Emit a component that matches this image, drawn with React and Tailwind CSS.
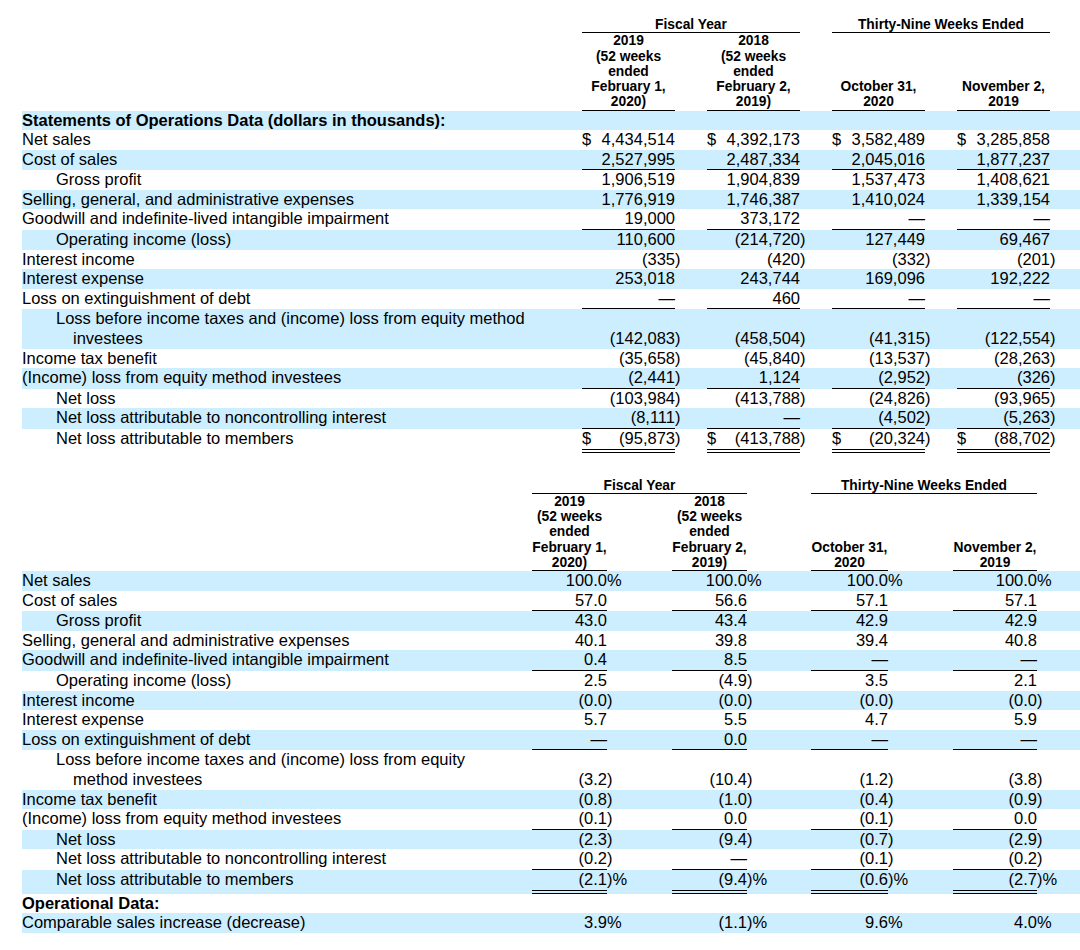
import React from "react";

const STRIPE = "bg-[#cceeff]";

const T1 = {
  label: "w-[560px]",
  cols: ["w-[93px]", "w-[93px]", "w-[93px]", "w-[93px]"],
  gaps: ["w-[32px]", "w-[32px]", "w-[32px]", "w-[12px]"],
  groupA: "w-[218px]",
  groupGap: "w-[32px]",
  groupB: "w-[218px]",
};

const T2 = {
  label: "w-[510px]",
  cols: ["w-[75px]", "w-[75px]", "w-[77px]", "w-[84px]"],
  gaps: ["w-[65px]", "w-[64px]", "w-[65px]", "w-[24px]"],
  groupA: "w-[215px]",
  groupGap: "w-[64px]",
  groupB: "w-[226px]",
};

const HEADS = [
  ["2019", "(52 weeks", "ended", "February 1,", "2020)"],
  ["2018", "(52 weeks", "ended", "February 2,", "2019)"],
  ["October 31,", "2020"],
  ["November 2,", "2019"],
];

const dollars = [
  { label: "Statements of Operations Data (dollars in thousands):", bold: true, s: true },
  { label: "Net sales", values: ["$4,434,514", "$4,392,173", "$3,582,489", "$3,285,858"] },
  { label: "Cost of sales", s: true, line: "single", values: ["2,527,995", "2,487,334", "2,045,016", "1,877,237"] },
  { label: "Gross profit", indent: 1, values: ["1,906,519", "1,904,839", "1,537,473", "1,408,621"] },
  { label: "Selling, general, and administrative expenses", s: true, values: ["1,776,919", "1,746,387", "1,410,024", "1,339,154"] },
  { label: "Goodwill and indefinite-lived intangible impairment", line: "single", values: ["19,000", "373,172", "—", "—"] },
  { label: "Operating income (loss)", indent: 1, s: true, values: ["110,600", "(214,720)", "127,449", "69,467"] },
  { label: "Interest income", values: ["(335)", "(420)", "(332)", "(201)"] },
  { label: "Interest expense", s: true, values: ["253,018", "243,744", "169,096", "192,222"] },
  { label: "Loss on extinguishment of debt", line: "single", values: ["—", "460", "—", "—"] },
  { label: "Loss before income taxes and (income) loss from equity method investees", indent: 2, s: true, values: ["(142,083)", "(458,504)", "(41,315)", "(122,554)"] },
  { label: "Income tax benefit", values: ["(35,658)", "(45,840)", "(13,537)", "(28,263)"] },
  { label: "(Income) loss from equity method investees", s: true, line: "single", values: ["(2,441)", "1,124", "(2,952)", "(326)"] },
  { label: "Net loss", indent: 1, values: ["(103,984)", "(413,788)", "(24,826)", "(93,965)"] },
  { label: "Net loss attributable to noncontrolling interest", indent: 1, s: true, line: "single", values: ["(8,111)", "—", "(4,502)", "(5,263)"] },
  { label: "Net loss attributable to members", indent: 1, line: "double", values: ["$(95,873)", "$(413,788)", "$(20,324)", "$(88,702)"] },
];

const percents = [
  { label: "Net sales", s: true, values: ["100.0%", "100.0%", "100.0%", "100.0%"] },
  { label: "Cost of sales", line: "single", values: ["57.0", "56.6", "57.1", "57.1"] },
  { label: "Gross profit", indent: 1, s: true, values: ["43.0", "43.4", "42.9", "42.9"] },
  { label: "Selling, general and administrative expenses", values: ["40.1", "39.8", "39.4", "40.8"] },
  { label: "Goodwill and indefinite-lived intangible impairment", s: true, line: "single", values: ["0.4", "8.5", "—", "—"] },
  { label: "Operating income (loss)", indent: 1, values: ["2.5", "(4.9)", "3.5", "2.1"] },
  { label: "Interest income", s: true, values: ["(0.0)", "(0.0)", "(0.0)", "(0.0)"] },
  { label: "Interest expense", values: ["5.7", "5.5", "4.7", "5.9"] },
  { label: "Loss on extinguishment of debt", s: true, line: "single", values: ["—", "0.0", "—", "—"] },
  { label: "Loss before income taxes and (income) loss from equity method investees", indent: 2, values: ["(3.2)", "(10.4)", "(1.2)", "(3.8)"] },
  { label: "Income tax benefit", s: true, values: ["(0.8)", "(1.0)", "(0.4)", "(0.9)"] },
  { label: "(Income) loss from equity method investees", line: "single", values: ["(0.1)", "0.0", "(0.1)", "0.0"] },
  { label: "Net loss", indent: 1, s: true, values: ["(2.3)", "(9.4)", "(0.7)", "(2.9)"] },
  { label: "Net loss attributable to noncontrolling interest", indent: 1, line: "single", values: ["(0.2)", "—", "(0.1)", "(0.2)"] },
  { label: "Net loss attributable to members", indent: 1, s: true, line: "double", values: ["(2.1)%", "(9.4)%", "(0.6)%", "(2.7)%"] },
  { label: "Operational Data:", bold: true },
  { label: "Comparable sales increase (decrease)", s: true, values: ["3.9%", "(1.1)%", "9.6%", "4.0%"] },
];

function split(v) {
  let dollar = false;
  let main = v;
  if (main.startsWith("$")) {
    dollar = true;
    main = main.slice(1);
  }
  let suffix = "";
  if (main.endsWith(")%")) {
    suffix = ")%";
    main = main.slice(0, -2);
  } else if (main.endsWith(")")) {
    suffix = ")";
    main = main.slice(0, -1);
  } else if (main.endsWith("%")) {
    suffix = "%";
    main = main.slice(0, -1);
  }
  return { dollar, main, suffix };
}

function Header({ t }) {
  return (
    <div className="text-[13.8px] leading-[15.25px] font-bold text-center">
      <div className="flex">
        <div className={`${t.label} shrink-0`} />
        <div className={`${t.groupA} shrink-0 border-b border-black`}>Fiscal Year</div>
        <div className={`${t.groupGap} shrink-0`} />
        <div className={`${t.groupB} shrink-0 border-b border-black`}>Thirty-Nine Weeks Ended</div>
      </div>
      <div className="flex items-end">
        <div className={`${t.label} shrink-0`} />
        {HEADS.map((lines, i) => (
          <React.Fragment key={i}>
            <div className={`${t.cols[i]} shrink-0 whitespace-nowrap border-b border-black`}>
              {lines.map((l) => (
                <div key={l}>{l}</div>
              ))}
            </div>
            <div className={`${t.gaps[i]} shrink-0`} />
          </React.Fragment>
        ))}
      </div>
    </div>
  );
}

function Row({ t, row }) {
  const indent =
    row.indent === 2
      ? "pl-[51px] -indent-[17px]"
      : row.indent === 1
      ? "pl-[34px]"
      : "pl-0";
  const line =
    row.line === "single"
      ? "border-b border-black"
      : row.line === "double"
      ? "border-b-4 border-double border-black"
      : "";
  // keep the hanging ")" / "%" on the same baseline as the underlined number
  const pad = row.line === "single" ? "pb-px" : row.line === "double" ? "pb-[4px]" : "";
  return (
    <div className={`flex ${row.s ? STRIPE : ""}`}>
      <div className={`${t.label} shrink-0 pr-[30px] ${indent} ${row.bold ? "font-bold" : ""}`}>
        {row.label}
      </div>
      {(row.values || []).map((v, i) => {
        const { dollar, main, suffix } = split(v);
        return (
          <React.Fragment key={i}>
            <div
              className={`${t.cols[i]} shrink-0 flex items-end whitespace-nowrap ${
                dollar ? "justify-between" : "justify-end"
              } ${line}`}
            >
              {dollar && <span>$</span>}
              <span>{main}</span>
            </div>
            <div className={`${t.gaps[i]} shrink-0 flex items-end whitespace-nowrap ${pad}`}>{suffix}</div>
          </React.Fragment>
        );
      })}
    </div>
  );
}

function Table({ t, rows, className }) {
  return (
    <div className={className}>
      <Header t={t} />
      <div className="text-[16.5px] leading-[19.6px]">
        {rows.map((r) => (
          <Row key={r.label} t={t} row={r} />
        ))}
      </div>
    </div>
  );
}

export default function App() {
  return (
    <div className="min-h-[950px] w-[1080px] bg-white pt-[17px] pl-[22px] text-black font-['Liberation_Sans',Arial,sans-serif]">
      <Table t={T1} rows={dollars} />
      <Table t={T2} rows={percents} className="mt-[25px]" />
    </div>
  );
}
